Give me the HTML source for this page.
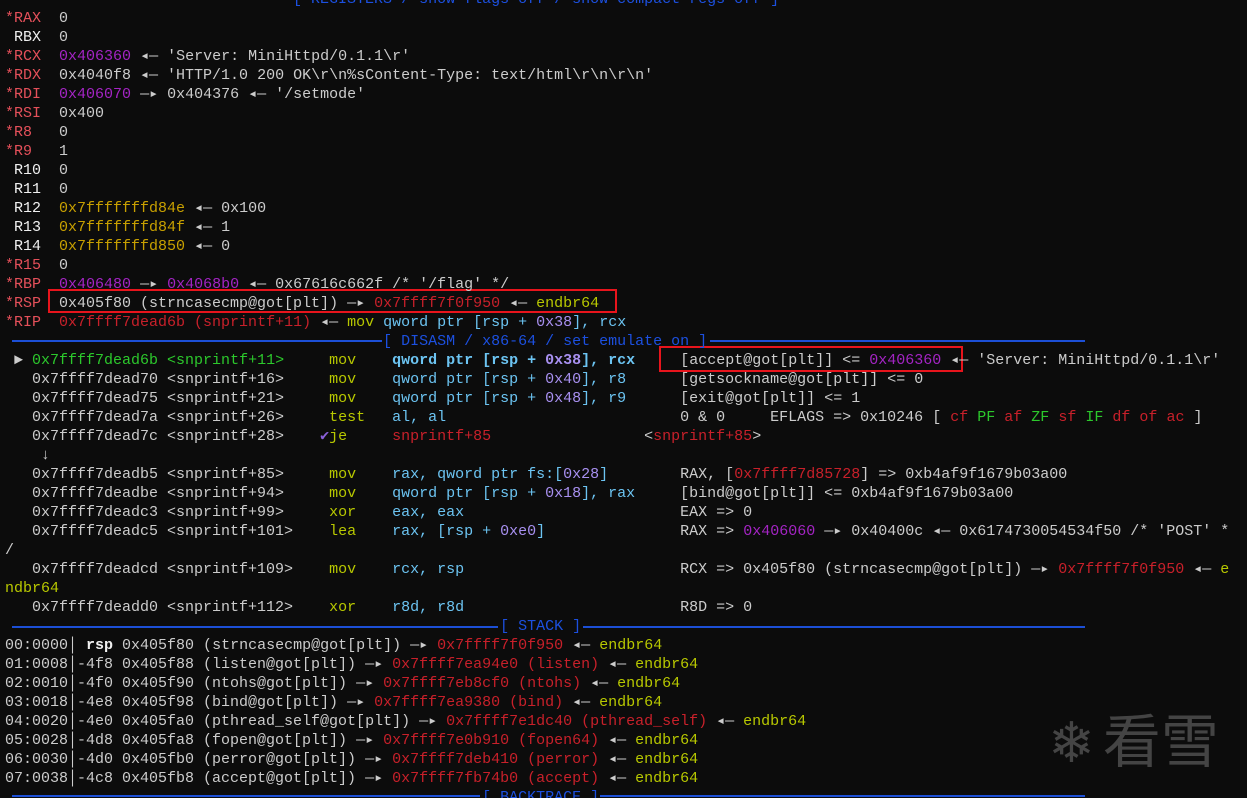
<!DOCTYPE html>
<html><head><meta charset="utf-8"><style>
html,body{margin:0;padding:0;background:#0c0c0c;width:1247px;height:798px;overflow:hidden;position:relative}
pre{position:absolute;left:5px;top:-10px;margin:0;font:15px/19px "Liberation Mono","DejaVu Sans Mono",monospace;color:#cccccc;white-space:pre}
i{font-style:normal;display:inline-block;width:9px;text-align:center;overflow:visible}
.r{color:#e5505a}.w{color:#f0f0f0}.p{color:#a424c4}.y{color:#c8a000}.rd{color:#c8202a}
.g{color:#b8c800}.b{color:#6cc4f2}.n{color:#a890f0}.gr{color:#2cc82c}.h{color:#1c50e0}
.bo{font-weight:bold}.ck{color:#8a60d8}
.ln{position:absolute;height:2px;background:#1c4fd6}
.box{position:absolute;border:2px solid #e8141c}
.wm{position:absolute;left:1048px;top:702px;color:#6a6a6a;opacity:.6;font:58px/70px "Noto Sans CJK SC",sans-serif}
</style></head><body>
<div class="ln" style="left:12px;top:340px;width:370px"></div>
<div class="ln" style="left:710px;top:340px;width:375px"></div>
<div class="ln" style="left:12px;top:626px;width:486px"></div>
<div class="ln" style="left:583px;top:626px;width:502px"></div>
<div class="ln" style="left:12px;top:795px;width:468px"></div>
<div class="ln" style="left:600px;top:795px;width:485px"></div>
<div class="box" style="left:48px;top:289px;width:565px;height:20px"></div>
<div class="box" style="left:659px;top:346px;width:300px;height:22px"></div>
<div class="wm"><span style="font-size:56px">❄</span><span style="margin-left:8px">看雪</span></div>
<pre><span class="h">                                [ REGISTERS / show-flags off / show-compact-regs off ]</span>
<span class="r">*RAX</span>  0
<span class="w"> RBX</span>  0
<span class="r">*RCX</span>  <span class="p">0x406360</span> <i>◂</i><i>—</i> 'Server: MiniHttpd/0.1.1\r'
<span class="r">*RDX</span>  0x4040f8 <i>◂</i><i>—</i> 'HTTP/1.0 200 OK\r\n%sContent-Type: text/html\r\n\r\n'
<span class="r">*RDI</span>  <span class="p">0x406070</span> <i>—</i><i>▸</i> 0x404376 <i>◂</i><i>—</i> '/setmode'
<span class="r">*RSI</span>  0x400
<span class="r">*R8 </span>  0
<span class="r">*R9 </span>  1
<span class="w"> R10</span>  0
<span class="w"> R11</span>  0
<span class="w"> R12</span>  <span class="y">0x7fffffffd84e</span> <i>◂</i><i>—</i> 0x100
<span class="w"> R13</span>  <span class="y">0x7fffffffd84f</span> <i>◂</i><i>—</i> 1
<span class="w"> R14</span>  <span class="y">0x7fffffffd850</span> <i>◂</i><i>—</i> 0
<span class="r">*R15</span>  0
<span class="r">*RBP</span>  <span class="p">0x406480</span> <i>—</i><i>▸</i> <span class="p">0x4068b0</span> <i>◂</i><i>—</i> 0x67616c662f /* '/flag' */
<span class="r">*RSP</span>  0x405f80 (strncasecmp@got[plt]) <i>—</i><i>▸</i> <span class="rd">0x7ffff7f0f950</span> <i>◂</i><i>—</i> <span class="g">endbr64</span>
<span class="r">*RIP</span>  <span class="rd">0x7ffff7dead6b (snprintf+11)</span> <i>◂</i><i>—</i> <span class="g">mov</span> <span class="b">qword ptr [rsp + </span><span class="n">0x38</span><span class="b">], rcx</span>
<span class="h">                                          [ DISASM / x86-64 / set emulate on ]</span>
 <i>►</i> <span class="gr">0x7ffff7dead6b &lt;snprintf+11&gt;</span>     <span class="g">mov</span>    <span class="b bo">qword ptr [rsp + <span class="n">0x38</span>], rcx</span>     [accept@got[plt]] &lt;= <span class="p">0x406360</span> <i>◂</i><i>—</i> 'Server: MiniHttpd/0.1.1\r'
   0x7ffff7dead70 &lt;snprintf+16&gt;     <span class="g">mov</span>    <span class="b">qword ptr [rsp + <span class="n">0x40</span>], r8</span>      [getsockname@got[plt]] &lt;= 0
   0x7ffff7dead75 &lt;snprintf+21&gt;     <span class="g">mov</span>    <span class="b">qword ptr [rsp + <span class="n">0x48</span>], r9</span>      [exit@got[plt]] &lt;= 1
   0x7ffff7dead7a &lt;snprintf+26&gt;     <span class="g">test</span>   <span class="b">al, al</span>                          0 &amp; 0     EFLAGS =&gt; 0x10246 [ <span class="rd">cf</span> <span class="gr">PF</span> <span class="rd">af</span> <span class="gr">ZF</span> <span class="rd">sf</span> <span class="gr">IF</span> <span class="rd">df</span> <span class="rd">of</span> <span class="rd">ac</span> ]
   0x7ffff7dead7c &lt;snprintf+28&gt;    <i class="ck">✔</i><span class="g">je</span>     <span class="rd">snprintf+85</span>                 &lt;<span class="rd">snprintf+85</span>&gt;
    <i>↓</i>
   0x7ffff7deadb5 &lt;snprintf+85&gt;     <span class="g">mov</span>    <span class="b">rax, qword ptr fs:[<span class="n">0x28</span>]</span>        RAX, [<span class="rd">0x7ffff7d85728</span>] =&gt; 0xb4af9f1679b03a00
   0x7ffff7deadbe &lt;snprintf+94&gt;     <span class="g">mov</span>    <span class="b">qword ptr [rsp + <span class="n">0x18</span>], rax</span>     [bind@got[plt]] &lt;= 0xb4af9f1679b03a00
   0x7ffff7deadc3 &lt;snprintf+99&gt;     <span class="g">xor</span>    <span class="b">eax, eax</span>                        EAX =&gt; 0
   0x7ffff7deadc5 &lt;snprintf+101&gt;    <span class="g">lea</span>    <span class="b">rax, [rsp + <span class="n">0xe0</span>]</span>               RAX =&gt; <span class="p">0x406060</span> <i>—</i><i>▸</i> 0x40400c <i>◂</i><i>—</i> 0x6174730054534f50 /* 'POST' *
/
   0x7ffff7deadcd &lt;snprintf+109&gt;    <span class="g">mov</span>    <span class="b">rcx, rsp</span>                        RCX =&gt; 0x405f80 (strncasecmp@got[plt]) <i>—</i><i>▸</i> <span class="rd">0x7ffff7f0f950</span> <i>◂</i><i>—</i> <span class="g">e</span>
<span class="g">ndbr64</span>
   0x7ffff7deadd0 &lt;snprintf+112&gt;    <span class="g">xor</span>    <span class="b">r8d, r8d</span>                        R8D =&gt; 0
<span class="h">                                                       [ STACK ]</span>
00:0000<i>│</i> <span class="w bo">rsp</span> 0x405f80 (strncasecmp@got[plt]) <i>—</i><i>▸</i> <span class="rd">0x7ffff7f0f950</span> <i>◂</i><i>—</i> <span class="g">endbr64</span>
01:0008<i>│</i>-4f8 0x405f88 (listen@got[plt]) <i>—</i><i>▸</i> <span class="rd">0x7ffff7ea94e0 (listen)</span> <i>◂</i><i>—</i> <span class="g">endbr64</span>
02:0010<i>│</i>-4f0 0x405f90 (ntohs@got[plt]) <i>—</i><i>▸</i> <span class="rd">0x7ffff7eb8cf0 (ntohs)</span> <i>◂</i><i>—</i> <span class="g">endbr64</span>
03:0018<i>│</i>-4e8 0x405f98 (bind@got[plt]) <i>—</i><i>▸</i> <span class="rd">0x7ffff7ea9380 (bind)</span> <i>◂</i><i>—</i> <span class="g">endbr64</span>
04:0020<i>│</i>-4e0 0x405fa0 (pthread_self@got[plt]) <i>—</i><i>▸</i> <span class="rd">0x7ffff7e1dc40 (pthread_self)</span> <i>◂</i><i>—</i> <span class="g">endbr64</span>
05:0028<i>│</i>-4d8 0x405fa8 (fopen@got[plt]) <i>—</i><i>▸</i> <span class="rd">0x7ffff7e0b910 (fopen64)</span> <i>◂</i><i>—</i> <span class="g">endbr64</span>
06:0030<i>│</i>-4d0 0x405fb0 (perror@got[plt]) <i>—</i><i>▸</i> <span class="rd">0x7ffff7deb410 (perror)</span> <i>◂</i><i>—</i> <span class="g">endbr64</span>
07:0038<i>│</i>-4c8 0x405fb8 (accept@got[plt]) <i>—</i><i>▸</i> <span class="rd">0x7ffff7fb74b0 (accept)</span> <i>◂</i><i>—</i> <span class="g">endbr64</span>
<span class="h">                                                     [ BACKTRACE ]</span>
</pre>
</body></html>
